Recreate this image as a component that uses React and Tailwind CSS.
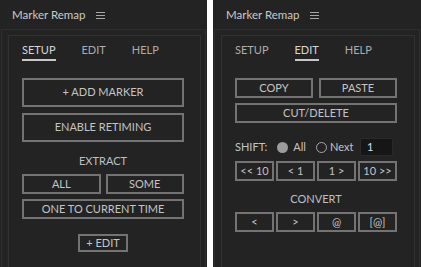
import React from 'react';

const font = { fontFamily: 'Lato, "Open Sans", sans-serif' };

const Hamburger = () => (
  <svg width="9" height="7" viewBox="0 0 9 7" className="ml-[11px] mt-[1px]">
    <path d="M0 0.5H9M0 3.5H9M0 6.5H9" stroke="#a6a6a6" strokeWidth="1" />
  </svg>
);

const Btn = ({ children, className = '' }) => (
  <div
    className={`flex items-center justify-center border-2 border-[#737373] bg-[#232323] text-[11px] text-[#c4c4c4] ${className}`}
  >
    {children}
  </div>
);

const Tabs = ({ active }) => (
  <div className="mt-[7px] flex gap-[26px] text-[11px] leading-[14px]">
    {['SETUP', 'EDIT', 'HELP'].map(t => (
      <div key={t} className="flex flex-col">
        <span className={t === active ? 'text-[#d6d6d6]' : 'text-[#acacac]'}>{t}</span>
        <div className={`mt-[2px] h-[2px] ${t === active ? 'bg-[#c8c8c8]' : ''}`} />
      </div>
    ))}
  </div>
);

const Panel = ({ width, titleLeft, children }) => (
  <div className={`flex h-full ${width} flex-col bg-[#232323]`} style={font}>
    <div className={`flex h-[29px] items-center ${titleLeft}`}>
      <span className="text-[11.5px] text-[#cacaca]">Marker Remap</span>
      <Hamburger />
    </div>
    <div className="ml-px mr-px flex flex-1 flex-col border-x border-t border-[#2e2e2e] pl-[6px] pr-[4px] pt-[5px]">
      <div className="flex flex-1 flex-col border-x border-t border-[#313131] pl-[13px]">
        <div className="flex w-[162px] flex-col">{children}</div>
      </div>
    </div>
  </div>
);

const Setup = () => (
  <>
    <Tabs active="SETUP" />
    <Btn className="mt-[17px] h-[29px]">+ ADD MARKER</Btn>
    <Btn className="mt-[6px] h-[29px]">ENABLE RETIMING</Btn>
    <div className="mt-[12px] text-center text-[11px] leading-[14px] text-[#bcc0c4]">EXTRACT</div>
    <div className="mt-[6px] flex gap-[5px]">
      <Btn className="h-[20px] flex-1">ALL</Btn>
      <Btn className="h-[20px] flex-1">SOME</Btn>
    </div>
    <Btn className="mt-[5px] h-[20px]">ONE TO CURRENT TIME</Btn>
    <Btn className="mx-auto mt-[15px] h-[18px] w-[50px]">+ EDIT</Btn>
  </>
);

const Edit = () => (
  <>
    <Tabs active="EDIT" />
    <div className="mt-[17px] flex gap-[6px]">
      <Btn className="h-[20px] flex-1">COPY</Btn>
      <Btn className="h-[20px] flex-1">PASTE</Btn>
    </div>
    <Btn className="mt-[5px] h-[20px]">CUT/DELETE</Btn>
    <div className="mt-[15px] flex h-[18px] items-center text-[11px] text-[#c4c4c4]">
      <span>SHIFT:</span>
      <span className="ml-[10px] h-[11px] w-[11px] rounded-full bg-[#9c9c9c]" />
      <span className="ml-[5px]">All</span>
      <span className="ml-[10px] h-[11px] w-[11px] rounded-full border border-[#a6a6a6]" />
      <span className="ml-[3px]">Next</span>
      <div className="ml-auto mr-[4px] flex h-[18px] w-[33px] items-center rounded-[2px] border border-[#2a2a2a] bg-[#161616] pl-[6px] text-[11px] text-[#d4e0f0]">
        1
      </div>
    </div>
    <div className="mt-[5px] grid grid-cols-4 gap-[2px]">
      {['<< 10', '< 1', '1 >', '10 >>'].map(l => (
        <Btn key={l} className="h-[20px]">{l}</Btn>
      ))}
    </div>
    <div className="mt-[11px] text-center text-[11px] leading-[14px] text-[#bcc0c4]">CONVERT</div>
    <div className="mt-[6px] grid grid-cols-4 gap-[2px]">
      {['<', '>', '@', '[@]'].map(l => (
        <Btn key={l} className="h-[20px]">{l}</Btn>
      ))}
    </div>
  </>
);

export default function App() {
  return (
    <div className="flex h-[267px] w-[421px] gap-[6px] overflow-hidden bg-white">
      <Panel width="w-[207px]" titleLeft="pl-[12px]">
        <Setup />
      </Panel>
      <Panel width="w-[208px]" titleLeft="pl-[13px]">
        <Edit />
      </Panel>
    </div>
  );
}
